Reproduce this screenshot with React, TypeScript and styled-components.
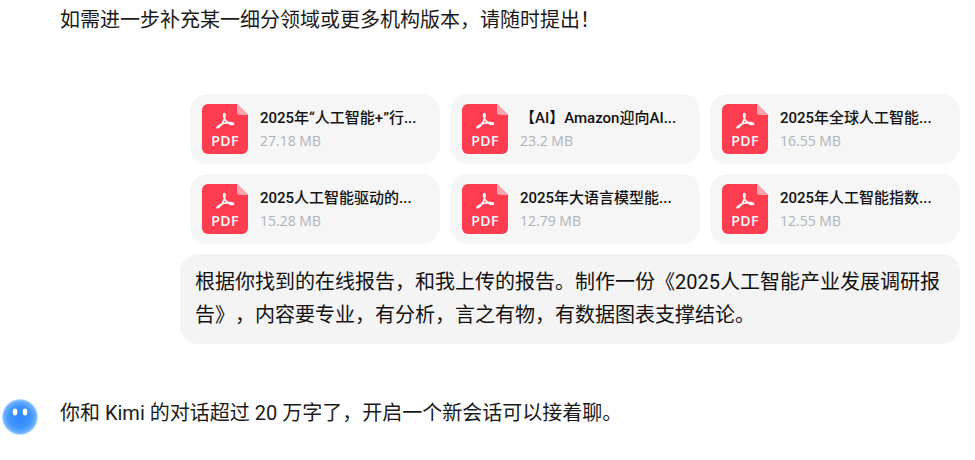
import React from 'react';
import styled, { createGlobalStyle } from 'styled-components';

const GlobalStyle = createGlobalStyle`
  html, body {
    margin: 0;
    padding: 0;
    background: #fff;
    overflow: hidden;
  }
  body {
    font-family: Roboto, 'Noto Sans CJK SC', sans-serif;
    color: #000;
    text-spacing-trim: space-all;
  }
`;

const Page = styled.div`
  width: 975px;
  height: 460px;
  display: flex;
  flex-direction: column;
  box-sizing: border-box;
  padding-right: 15px;
`;

const AnswerText = styled.div`
  margin: 0 0 0 60px;
  height: 40px;
  font-size: 20px;
  line-height: 40px;
  color: #1a1a1a;
`;

const UserBlock = styled.div`
  margin-top: 54px;
  display: flex;
  flex-direction: column;
  align-items: flex-end;
  gap: 10px;
`;

const FileGrid = styled.div`
  display: grid;
  grid-template-columns: repeat(3, 250px);
  gap: 10px;
`;

const FileCard = styled.div`
  height: 70px;
  box-sizing: border-box;
  padding: 0 12px;
  display: flex;
  align-items: center;
  gap: 12px;
  background: #f6f6f6;
  border-radius: 18px;
`;

const FileInfo = styled.div`
  min-width: 0;
  display: flex;
  flex-direction: column;
  gap: 2px;
`;

const FileName = styled.div`
  font-size: 15px;
  line-height: 22px;
  font-weight: 500;
  color: #111;
  white-space: nowrap;
`;

const FileSize = styled.div`
  font-family: 'Open Sans', sans-serif;
  font-size: 14px;
  line-height: 20px;
  color: #b0b3b8;
`;

const Bubble = styled.div`
  width: 780px;
  box-sizing: border-box;
  padding: 12px 15px;
  background: #f4f4f5;
  border-radius: 18px;
  font-size: 20px;
  line-height: 33px;
  color: #111;
`;

const NoticeRow = styled.div`
  margin-top: 49px;
  display: flex;
  align-items: flex-start;
  gap: 22px;
  padding-left: 2px;
`;

const AvatarWrap = styled.div`
  margin-top: 6px;
  width: 36px;
  height: 36px;
`;

const NoticeText = styled.div`
  font-size: 20px;
  line-height: 40px;
  color: #1a1a1a;
`;

function PdfIcon() {
  return (
    <svg width="46" height="50" viewBox="0 0 46 50" fill="none">
      <path
        d="M6 0H35L46 11V44a6 6 0 0 1-6 6H6a6 6 0 0 1-6-6V6a6 6 0 0 1 6-6Z"
        fill="#ff3d50"
      />
      <path d="M35 0L46 11H38a3 3 0 0 1-3-3V0Z" fill="#ffa3ad" />
      <path
        d="M15.8 23.6C19 22 22 17 23 12C23.4 9.5 22 8.8 21.6 10.5C21 13 24 18 27 19.5C29 20.5 31.5 20.8 31.5 19.8C31.5 18.6 27 18.2 23 19C20 19.6 15 22 15 23.4C15 24.2 15.5 24 15.8 23.6Z"
        stroke="#fff"
        strokeWidth="1.6"
        strokeLinejoin="round"
      />
      <text
        x="23"
        y="42"
        textAnchor="middle"
        fill="#fff"
        fontSize="14"
        fontWeight="600"
        letterSpacing="0.4"
        fontFamily="'Open Sans', sans-serif"
      >
        PDF
      </text>
    </svg>
  );
}

function KimiAvatar() {
  return (
    <svg width="36" height="36" viewBox="0 0 36 36">
      <defs>
        <radialGradient id="kimiBall" cx="50%" cy="50%" r="50%">
          <stop offset="0%" stopColor="#2f86ff" />
          <stop offset="60%" stopColor="#3f94ff" />
          <stop offset="90%" stopColor="#6fb2ff" />
          <stop offset="100%" stopColor="#cfe6ff" />
        </radialGradient>
      </defs>
      <circle cx="18" cy="18" r="18" fill="url(#kimiBall)" />
      <ellipse cx="13" cy="13" rx="2.3" ry="3.4" fill="#fff" />
      <ellipse cx="23" cy="13" rx="2.3" ry="3.4" fill="#fff" />
    </svg>
  );
}

const files = [
  { name: '2025年“人工智能+”行...', size: '27.18 MB' },
  { name: '【AI】Amazon迎向AI...', size: '23.2 MB' },
  { name: '2025年全球人工智能...', size: '16.55 MB' },
  { name: '2025人工智能驱动的...', size: '15.28 MB' },
  { name: '2025年大语言模型能...', size: '12.79 MB' },
  { name: '2025年人工智能指数...', size: '12.55 MB' },
];

export default function App() {
  return (
    <Page>
      <GlobalStyle />
      <AnswerText>如需进一步补充某一细分领域或更多机构版本，请随时提出！</AnswerText>
      <UserBlock>
        <FileGrid>
          {files.map((file) => (
            <FileCard key={file.name}>
              <PdfIcon />
              <FileInfo>
                <FileName>{file.name}</FileName>
                <FileSize>{file.size}</FileSize>
              </FileInfo>
            </FileCard>
          ))}
        </FileGrid>
        <Bubble>
          根据你找到的在线报告，和我上传的报告。制作一份《2025人工智能产业发展调研报告》，内容要专业，有分析，言之有物，有数据图表支撑结论。
        </Bubble>
      </UserBlock>
      <NoticeRow>
        <AvatarWrap>
          <KimiAvatar />
        </AvatarWrap>
        <NoticeText>你和 Kimi 的对话超过 20 万字了，开启一个新会话可以接着聊。</NoticeText>
      </NoticeRow>
    </Page>
  );
}
